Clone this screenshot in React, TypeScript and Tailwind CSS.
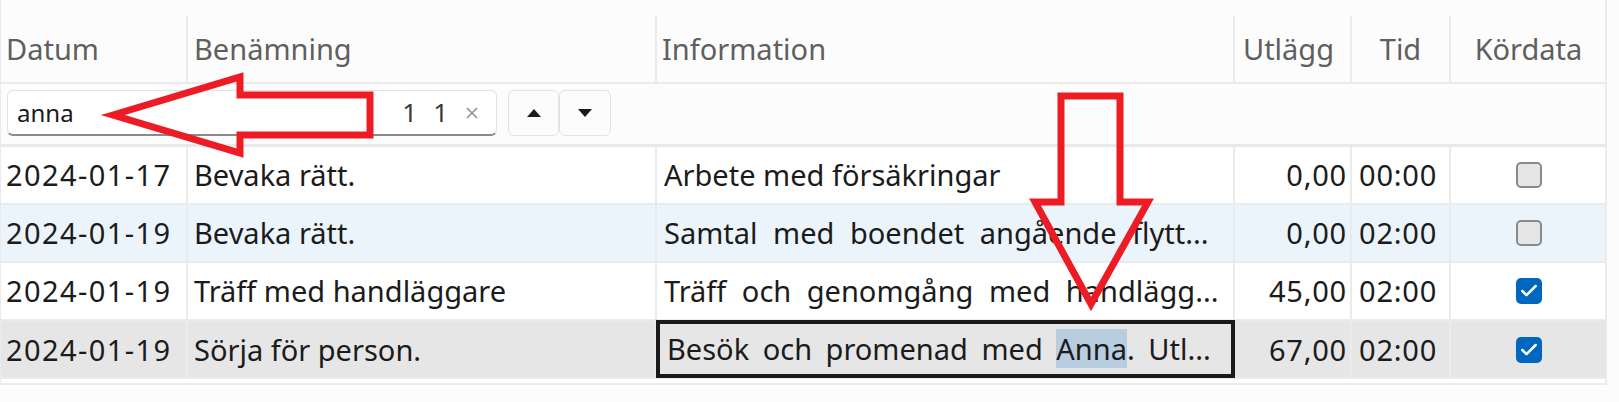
import { Check } from "lucide-react";

interface Row {
  date: string;
  name: string;
  info: React.ReactNode;
  infoSpacing: string;
  cost: string;
  time: string;
  done: boolean;
  bg: string;
  active?: boolean;
}

const rows: Row[] = [
  {
    date: "2024-01-17",
    name: "Bevaka rätt.",
    info: "Arbete med försäkringar",
    infoSpacing: "",
    cost: "0,00",
    time: "00:00",
    done: false,
    bg: "bg-white",
  },
  {
    date: "2024-01-19",
    name: "Bevaka rätt.",
    info: "Samtal med boendet angående flytt...",
    infoSpacing: "[word-spacing:8px]",
    cost: "0,00",
    time: "02:00",
    done: false,
    bg: "bg-[#ebf4fb]",
  },
  {
    date: "2024-01-19",
    name: "Träff med handläggare",
    info: "Träff och genomgång med handlägg...",
    infoSpacing: "[word-spacing:8px]",
    cost: "45,00",
    time: "02:00",
    done: true,
    bg: "bg-white",
  },
  {
    date: "2024-01-19",
    name: "Sörja för person.",
    info: (
      <>
        Besök och promenad med <span className="bg-[#b9cde1]">Anna</span>. Utl...
      </>
    ),
    infoSpacing: "[word-spacing:6px]",
    cost: "67,00",
    time: "02:00",
    done: true,
    bg: "bg-[#e6e6e6]",
    active: true,
  },
];

// column widths incl. their 2px right border; table has its own right border
const grid = "grid grid-cols-[187px_469px_578px_117px_99px_155px]";
const line = "border-r-2 border-[#ebebeb]";

function Checkbox({ checked }: { checked: boolean }) {
  if (checked) {
    return (
      <div className="w-[26px] h-[26px] rounded-[5px] bg-[#0067c0] flex items-center justify-center">
        <Check className="w-[20px] h-[20px] text-white" strokeWidth={3} />
      </div>
    );
  }
  return <div className="w-[26px] h-[26px] rounded-[5px] bg-[#e6e6e6] border-2 border-[#8a8a8a]" />;
}

export default function App() {
  return (
    <div className="relative w-[1619px] h-[402px] bg-[#fcfcfc] overflow-hidden text-[29px] text-[#1b1b1b] [font-family:'Noto_Sans',sans-serif]">
      <div className="w-[1607px] pt-4 border-l border-r-2 border-[#ebebeb]">
        {/* Header */}
        <div className={`${grid} h-[68px] border-b-2 border-[#ebebeb] text-[#5f5f5f]`}>
          <div className={`${line} flex items-center pl-[5px]`}>Datum</div>
          <div className={`${line} flex items-center pl-[6px]`}>Benämning</div>
          <div className={`${line} flex items-center pl-[5px]`}>Information</div>
          <div className={`${line} flex items-center justify-center pr-[8px]`}>Utlägg</div>
          <div className={`${line} flex items-center justify-center`}>Tid</div>
          <div className="flex items-center justify-center">Kördata</div>
        </div>

        {/* Search row */}
        <div className="h-[63px] border-b-[3px] border-[#e9e9e9] flex items-start pt-[6px] pl-[6px]">
          <div className="w-[490px] h-[46px] rounded-[6px] border border-[#e3e3e3] border-b-2 border-b-[#8a8a8a] bg-white flex items-center pl-[9px] pr-[18px] text-[24px]">
            <span className="flex-1">anna</span>
            <span className="text-[#3a3a3a] text-[26px] mr-[16px]">1</span>
            <span className="text-[#3a3a3a] text-[26px] mr-[18px]">1</span>
            <svg width="12" height="12" viewBox="0 0 12 12" className="text-[#8d8d8d]">
              <path d="M1 1 L11 11 M11 1 L1 11" stroke="currentColor" strokeWidth="1.5" />
            </svg>
          </div>
          <div className="ml-[11px] w-[51px] h-[46px] rounded-[6px] border border-[#e3e3e3] bg-[#fcfcfc] flex items-center justify-center">
            <svg width="14" height="8" viewBox="0 0 14 8">
              <path d="M7 0 L14 8 L0 8 Z" fill="#1b1b1b" />
            </svg>
          </div>
          <div className="w-[52px] h-[46px] rounded-[6px] border border-[#e3e3e3] bg-[#fcfcfc] flex items-center justify-center">
            <svg width="14" height="8" viewBox="0 0 14 8">
              <path d="M0 0 L14 0 L7 8 Z" fill="#1b1b1b" />
            </svg>
          </div>
        </div>

        {/* Rows */}
        {rows.map((r, i) => (
          <div key={i} className={`${grid} h-[58px] border-b-2 border-[#ebebeb] ${r.bg}`}>
            <div className={`${line} flex items-center pl-[5px] tracking-[1.4px]`}>{r.date}</div>
            <div className={`${line} flex items-center pl-[6px]`}>{r.name}</div>
            {r.active ? (
              <div
                className={`flex items-center whitespace-nowrap overflow-hidden -ml-px -mt-px h-[58px] pl-[7px] border-4 border-[#1a1a1a] ${r.infoSpacing}`}
              >
                <span>{r.info}</span>
              </div>
            ) : (
              <div className={`${line} flex items-center whitespace-nowrap overflow-hidden pl-[7px] ${r.infoSpacing}`}>
                <span>{r.info}</span>
              </div>
            )}
            <div className={`${line} flex items-center justify-end pr-[3px] tracking-[0.8px]`}>{r.cost}</div>
            <div className={`${line} flex items-center pl-[7px] tracking-[0.8px]`}>{r.time}</div>
            <div className="flex items-center justify-center">
              <Checkbox checked={r.done} />
            </div>
          </div>
        ))}
        <div className="h-[6px] border-b-2 border-[#ebebeb] bg-white" />
      </div>

      {/* Annotation arrows */}
      <svg className="absolute left-0 top-0 pointer-events-none" width="1619" height="402" viewBox="0 0 1619 402">
        <path
          d="M113 115 L240 77 L240 95 L370 95 L370 135 L240 135 L240 153 Z"
          fill="none"
          stroke="#ed1c24"
          strokeWidth="7"
        />
        <path
          d="M1061 96 L1120 96 L1120 202 L1148 202 L1091 304 L1035 202 L1061 202 Z"
          fill="none"
          stroke="#ed1c24"
          strokeWidth="7"
        />
      </svg>
    </div>
  );
}
